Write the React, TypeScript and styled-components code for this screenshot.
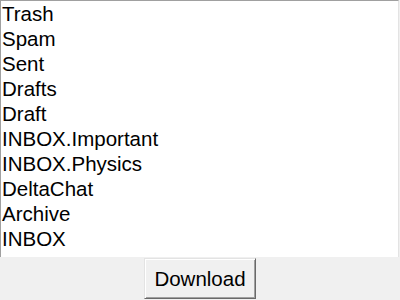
import React from "react";
import styled, { createGlobalStyle } from "styled-components";

const GlobalStyle = createGlobalStyle`
  html, body {
    margin: 0;
    padding: 0;
    background: #f0f0f0;
    font-family: "Liberation Sans", Arial, sans-serif;
  }
`;

const Window = styled.div`
  width: 400px;
  height: 300px;
  display: flex;
  flex-direction: column;
  align-items: center;
  overflow: hidden;
`;

const ListBox = styled.div`
  align-self: flex-start;
  box-sizing: border-box;
  width: 399px;
  height: 257px;
  background: #fff;
  border-top: 1px solid #a0a0a0;
  border-left: 1px solid #a0a0a0;
  border-right: 1px solid #e3e3e3;
  padding: 0 0 0 1px;
  overflow: hidden;
`;

const Item = styled.div`
  font-size: 20.5px;
  line-height: 25px;
  height: 25px;
  color: #000;
  white-space: nowrap;
`;

const Button = styled.button`
  margin-top: 1px;
  box-sizing: border-box;
  width: 112px;
  height: 41px;
  padding: 0;
  background: #f0f0f0;
  font-family: "Liberation Sans", Arial, sans-serif;
  font-size: 20.5px;
  color: #000;
  border-style: solid;
  border-width: 1px;
  border-color: #e3e3e3 #696969 #696969 #e3e3e3;
  box-shadow: inset 1px 1px 0 #fff, inset -1px -1px 0 #a0a0a0;
  border-radius: 0;
`;

const folders = [
  "Trash",
  "Spam",
  "Sent",
  "Drafts",
  "Draft",
  "INBOX.Important",
  "INBOX.Physics",
  "DeltaChat",
  "Archive",
  "INBOX",
];

const App = () => {
  return (
    <Window>
      <GlobalStyle />
      <ListBox>
        {folders.map((f) => (
          <Item key={f}>{f}</Item>
        ))}
      </ListBox>
      <Button>Download</Button>
    </Window>
  );
};

export default App;
